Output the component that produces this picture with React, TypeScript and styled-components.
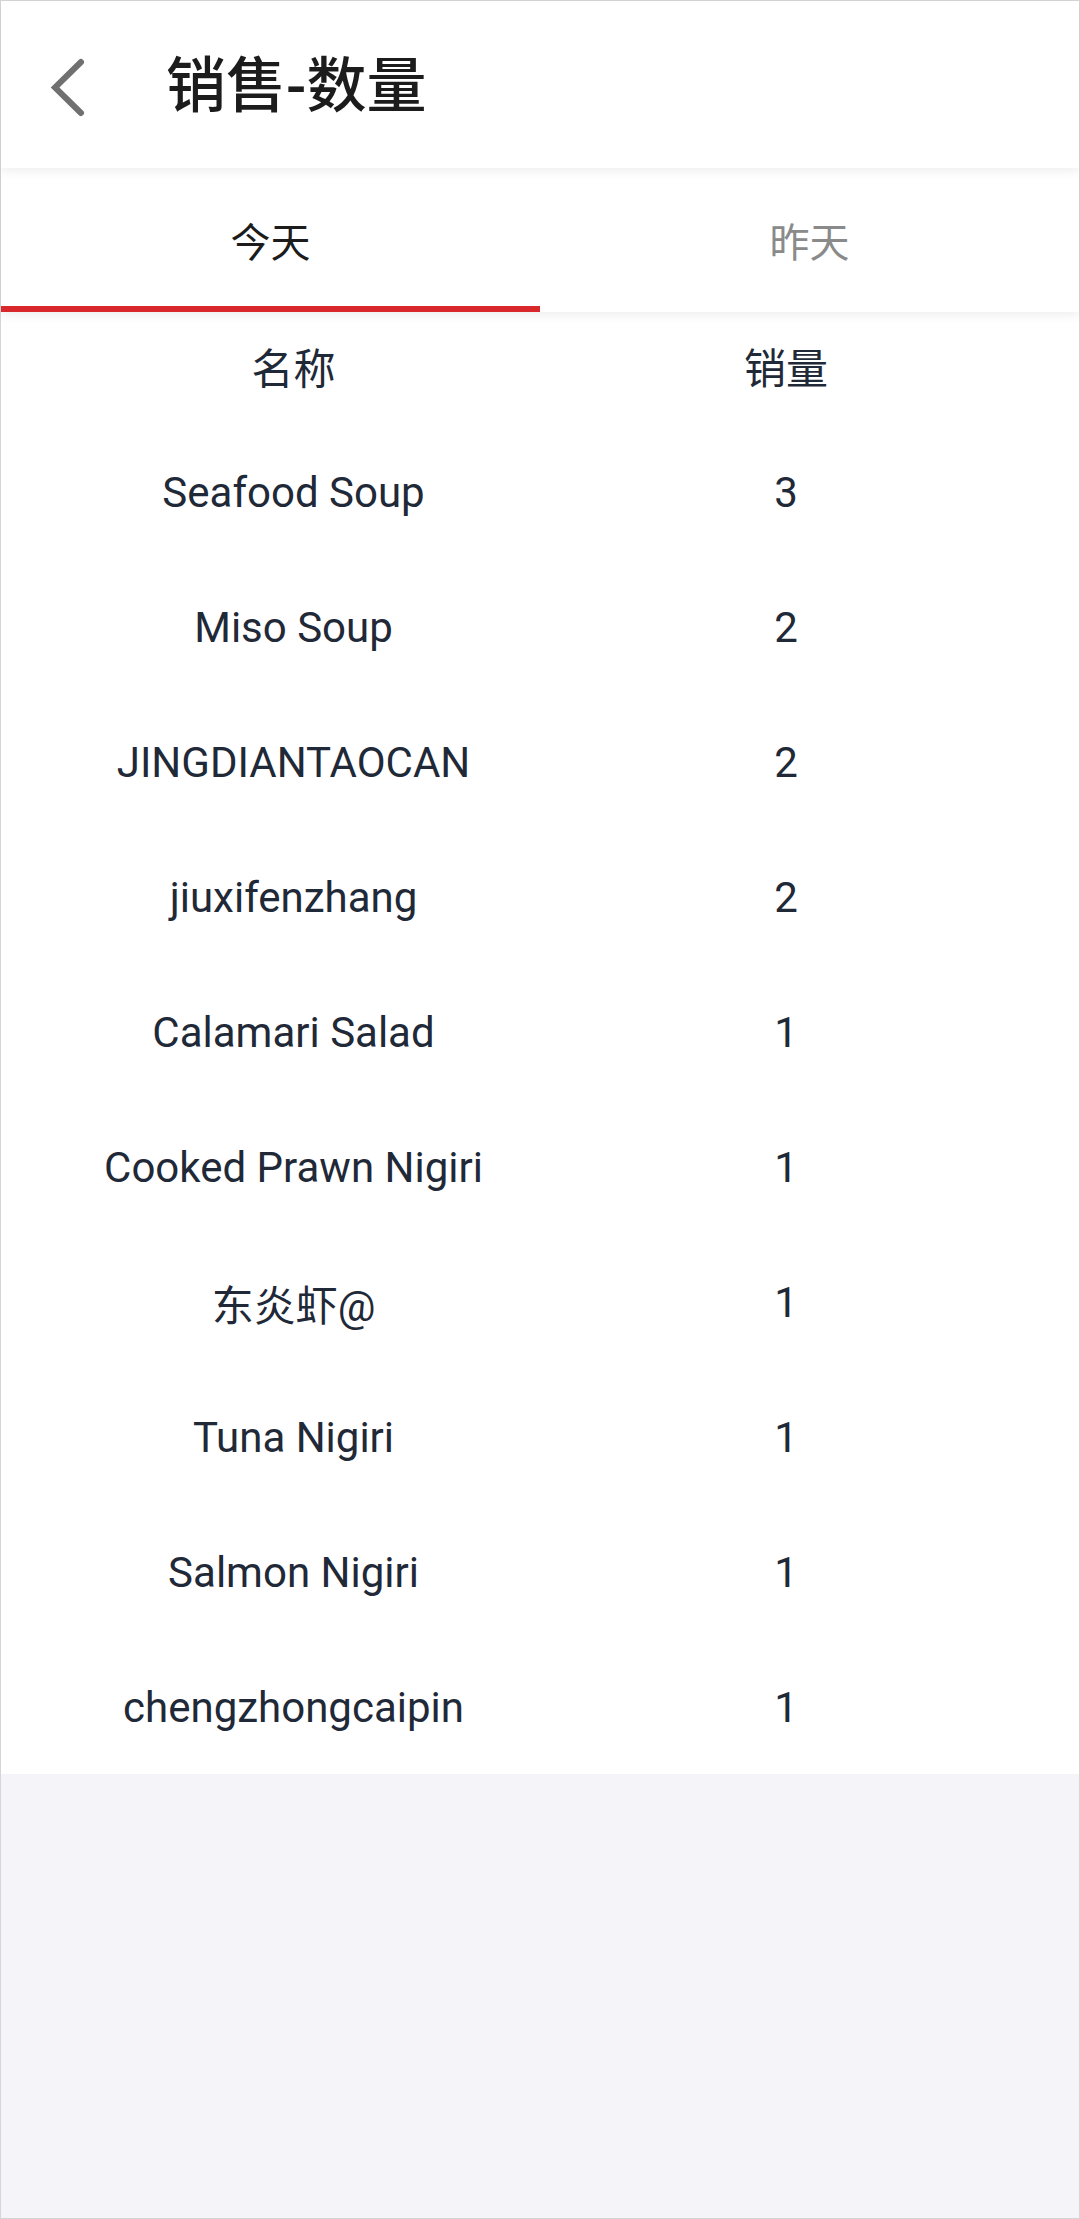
import React, { useState } from "react";
import styled, { createGlobalStyle } from "styled-components";

const GlobalStyle = createGlobalStyle`
  html, body { margin: 0; padding: 0; background: #f4f4f9; }
  * { box-sizing: border-box; }
  body { font-family: Roboto, "Noto Sans CJK SC", sans-serif; }
`;

const Frame = styled.div`
  width: 1080px;
  min-height: 2219px;
  border: 1px solid #d6d6d6;
  background: #f4f4f9;
  display: flex;
  flex-direction: column;
`;

const Header = styled.header`
  height: 167px;
  background: #fff;
  display: flex;
  align-items: center;
  position: relative;
  z-index: 2;
  box-shadow: 0 3px 10px rgba(0, 0, 0, 0.07);
`;

const BackButton = styled.button`
  border: none;
  background: transparent;
  padding: 0;
  margin-left: 48px;
  width: 40px;
  height: 62px;
  display: flex;
  align-items: center;
  justify-content: center;
  cursor: pointer;
  margin-top: 4px;
`;

const Title = styled.h1`
  margin: 4px 0 0 77px;
  font-family: Roboto, "Noto Sans CJK SC", sans-serif;
  font-size: 60px;
  font-weight: 500;
  color: #1c1c1c;
  letter-spacing: 0;
  line-height: 1;
`;

const TabBar = styled.nav`
  height: 144px;
  background: #fff;
  display: grid;
  grid-template-columns: 1fr 1fr;
  position: relative;
  z-index: 1;
  box-shadow: 0 3px 10px rgba(0, 0, 0, 0.07);
`;

const Tab = styled.button<{ $active: boolean }>`
  border: none;
  background: transparent;
  padding: 6px 0 0;
  font-family: Roboto, "Noto Sans CJK SC", sans-serif;
  font-size: 40px;
  color: ${(p) => (p.$active ? "#1c1c1c" : "#8a8a8a")};
  display: flex;
  align-items: center;
  justify-content: center;
  border-bottom: 6px solid ${(p) => (p.$active ? "#d9282b" : "transparent")};
  cursor: pointer;
`;

const Table = styled.section`
  background: #fff;
  display: flex;
  flex-direction: column;
`;

const Row = styled.div<{ $head?: boolean }>`
  display: grid;
  grid-template-columns: 585px 400px;
  height: ${(p) => (p.$head ? "112px" : "135px")};
  padding: ${(p) => (p.$head ? "0 0 5px" : "2px 0 0")};
  align-items: center;
  font-family: Roboto, "Noto Sans CJK SC", sans-serif;
  font-size: 42px;
  color: #1f2937;
`;

const Cell = styled.div`
  text-align: center;
  white-space: nowrap;
`;

const rows: [string, number][] = [
  ["Seafood Soup", 3],
  ["Miso Soup", 2],
  ["JINGDIANTAOCAN", 2],
  ["jiuxifenzhang", 2],
  ["Calamari Salad", 1],
  ["Cooked Prawn Nigiri", 1],
  ["东炎虾@", 1],
  ["Tuna Nigiri", 1],
  ["Salmon Nigiri", 1],
  ["chengzhongcaipin", 1],
];

export default function App() {
  const [tab, setTab] = useState(0);
  return (
    <>
      <GlobalStyle />
      <Frame>
        <Header>
          <BackButton aria-label="back">
            <svg width="40" height="62" viewBox="0 0 40 62">
              <path
                d="M32 6 L6 31.5 L32 57"
                fill="none"
                stroke="#707070"
                strokeWidth="6"
                strokeLinecap="round"
                strokeLinejoin="miter"
              />
            </svg>
          </BackButton>
          <Title>销售-数量</Title>
        </Header>
        <TabBar>
          <Tab $active={tab === 0} onClick={() => setTab(0)}>今天</Tab>
          <Tab $active={tab === 1} onClick={() => setTab(1)}>昨天</Tab>
        </TabBar>
        <Table>
          <Row $head>
            <Cell>名称</Cell>
            <Cell>销量</Cell>
          </Row>
          {rows.map(([name, qty]) => (
            <Row key={name}>
              <Cell>{name}</Cell>
              <Cell>{qty}</Cell>
            </Row>
          ))}
        </Table>
      </Frame>
    </>
  );
}
